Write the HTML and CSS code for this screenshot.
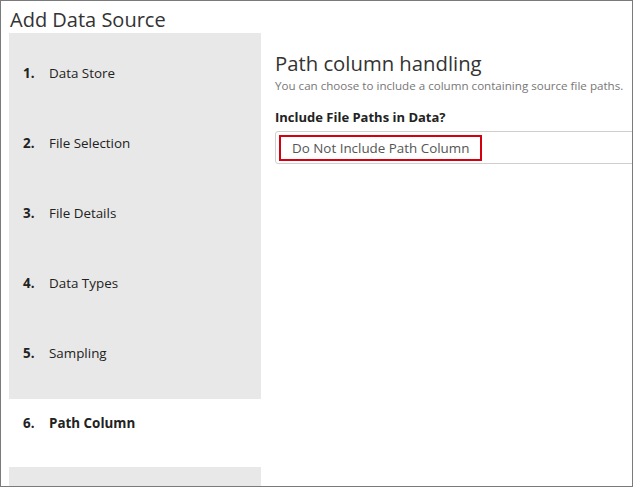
FILE: index.html
```html
<!DOCTYPE html>
<html>
<head>
<meta charset="utf-8">
<link rel="stylesheet" href="styles.css">
</head>
<body>
<div class="frame">
  <h1 class="title">Add Data Source</h1>
  <div class="main">
    <ol class="steps">
      <li class="step"><span class="num">1.</span><span class="label">Data Store</span></li>
      <li class="step"><span class="num">2.</span><span class="label">File Selection</span></li>
      <li class="step"><span class="num">3.</span><span class="label">File Details</span></li>
      <li class="step"><span class="num">4.</span><span class="label">Data Types</span></li>
      <li class="step"><span class="num">5.</span><span class="label">Sampling</span></li>
      <li class="step active"><span class="num">6.</span><span class="label">Path Column</span></li>
      <li class="step"></li>
    </ol>
    <div class="content">
      <h2 class="heading">Path column handling</h2>
      <p class="sub">You can choose to include a column containing source file paths.</p>
      <div class="field-label">Include File Paths in Data?</div>
      <div class="select">
        <span class="highlight">Do Not Include Path Column</span>
      </div>
    </div>
  </div>
</div>
</body>
</html>
```
FILE: styles.css
```css
html, body {
  margin: 0;
  padding: 0;
  background: #fff;
}
body {
  font-family: "Segoe UI", "Open Sans", "Noto Sans", sans-serif;
  color: #222;
  width: 634px;
  height: 488px;
  overflow: hidden;
}
.frame {
  box-sizing: border-box;
  width: 633px;
  height: 487px;
  border: 1px solid #7a7a7a;
  overflow: hidden;
  display: flex;
  flex-direction: column;
}
.title {
  margin: 0;
  padding: 6px 0 0 9px;
  height: 26px;
  font-size: 20px;
  font-weight: 400;
  line-height: 26px;
  color: #333;
}
.main {
  display: flex;
  flex: 1;
  min-height: 0;
}
.steps {
  list-style: none;
  margin: 0 0 0 8px;
  padding: 16px 0 0 0;
  width: 252px;
  flex: none;
  background: #e8e8e8;
}
.step {
  box-sizing: border-box;
  height: 70px;
  padding: 14px 0 0 14px;
  display: flex;
  font-size: 13.4px;
  line-height: 20px;
  color: #222;
}
.step.active {
  background: #fff;
  border-bottom: 2px solid #e8e8e8;
}
.num {
  width: 26px;
  font-weight: 700;
}
.active .label {
  font-weight: 700;
}
.content {
  flex: 1;
  min-width: 0;
  overflow: hidden;
  padding: 16px 0 0 14px;
}
.heading {
  margin: 0;
  font-size: 20.3px;
  font-weight: 400;
  line-height: 28px;
  color: #333;
}
.sub {
  margin: 1px 0 0 0;
  font-size: 11.6px;
  line-height: 16px;
  color: #777;
}
.field-label {
  margin-top: 14px;
  font-size: 13px;
  font-weight: 700;
  line-height: 18px;
  color: #222;
}
.select {
  box-sizing: border-box;
  margin-top: 5px;
  width: 420px;
  height: 33px;
  border: 1px solid #cfcfcf;
  border-radius: 3px;
  padding: 3px 0 0 3px;
}
.highlight {
  box-sizing: border-box;
  display: inline-block;
  width: 203px;
  height: 26px;
  border: 2px solid #d4000f;
  padding-left: 11px;
  font-size: 13.4px;
  line-height: 22px;
  color: #555;
}
```
